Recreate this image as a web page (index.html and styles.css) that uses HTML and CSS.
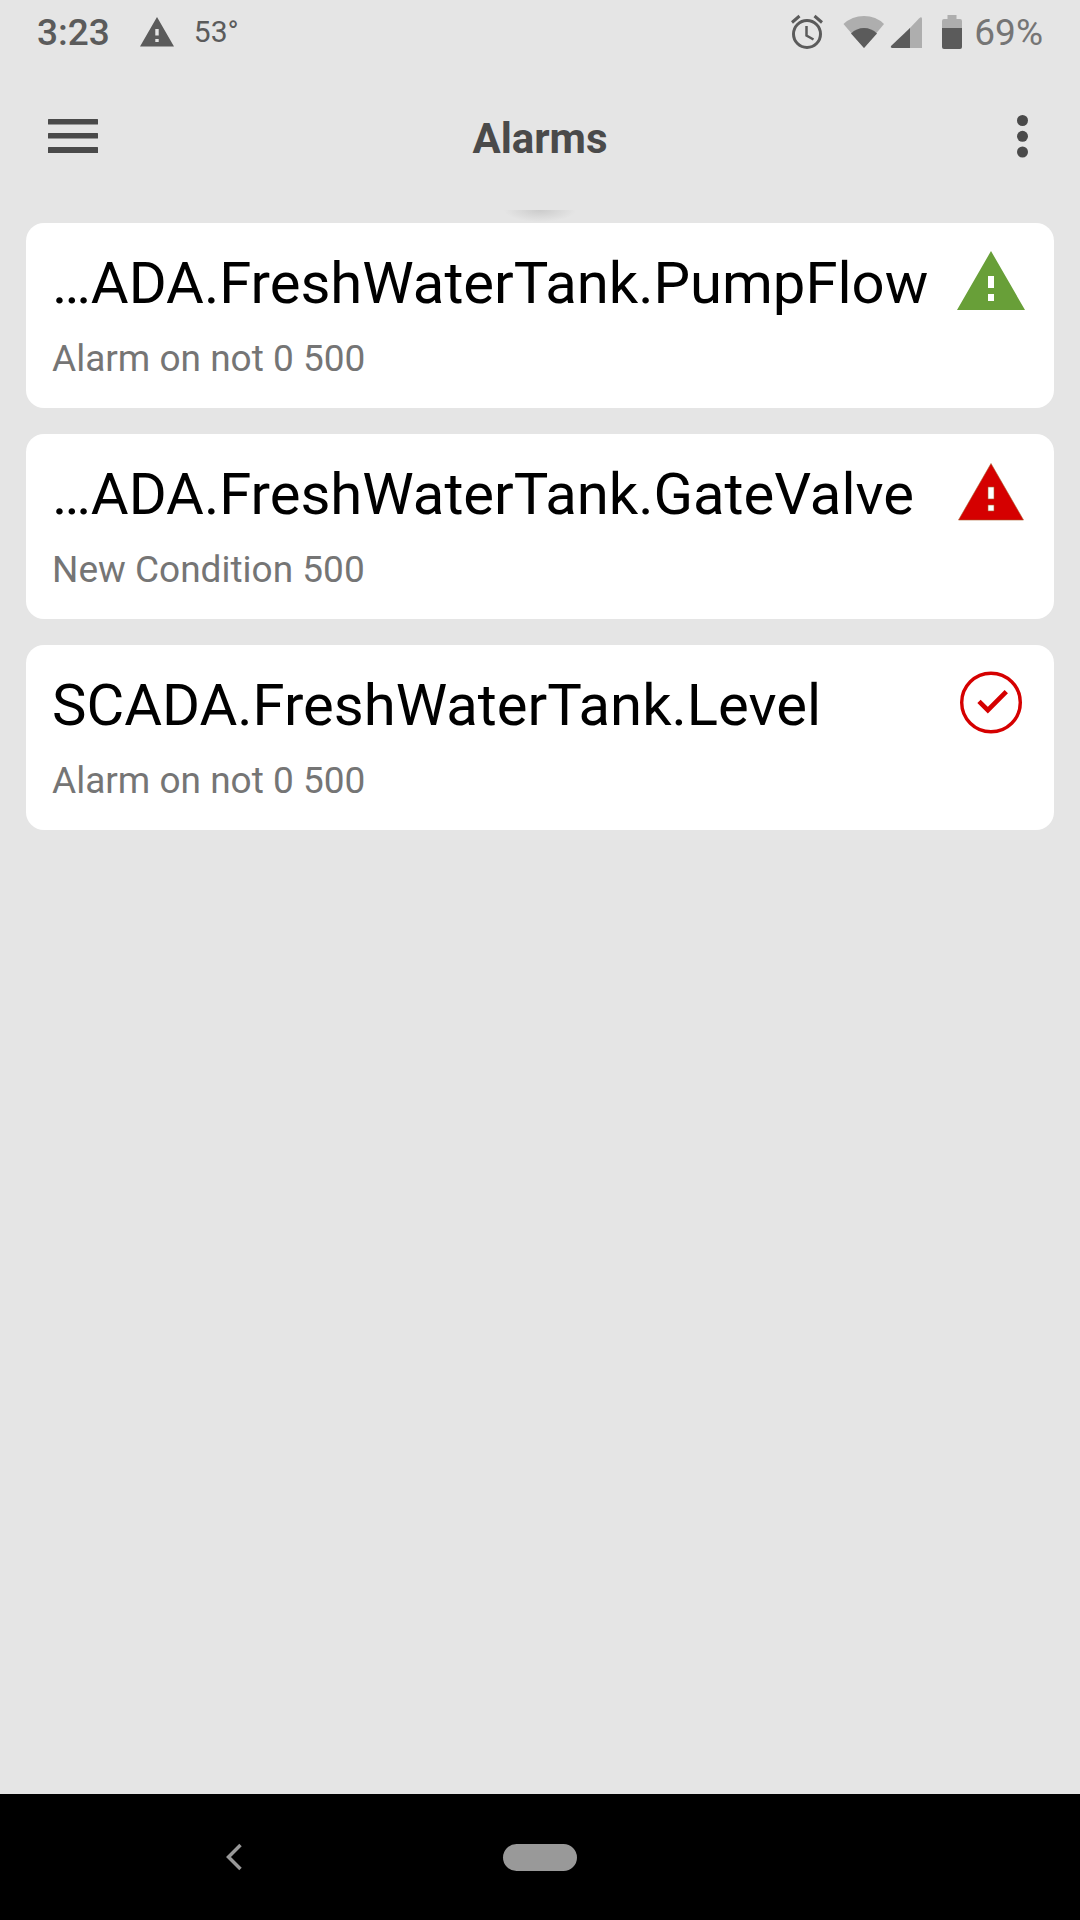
FILE: index.html
```html
<!DOCTYPE html>
<html lang="en">
<head>
<meta charset="utf-8">
<meta name="viewport" content="width=device-width, initial-scale=1">
<title>Alarms</title>
<link rel="stylesheet" href="styles.css">
</head>
<body>
<div class="status-bar">
  <div class="status-left">
    <span class="clock">3:23</span>
    <svg class="status-warning" width="36" height="30" viewBox="0 0 36 30" aria-hidden="true">
      <path fill="#5b5b5b" fill-rule="evenodd" d="M18 0 35 29.500H1ZM16.300 12v6.500h3.400V12ZM16.300 22v3h3.400v-3Z"/>
    </svg>
    <span class="temperature">53°</span>
  </div>
  <div class="status-right">
    <svg class="status-alarm" width="32" height="36" viewBox="0 0 32 36" aria-hidden="true">
      <g fill="none" stroke="#5b5b5b">
        <circle cx="16" cy="20" r="13.500" stroke-width="3"/>
        <path stroke-width="3" d="M1 8.500 8.500 2M31 8.500 23.500 2"/>
        <path stroke-width="2.500" d="M15.500 12v9.500l7 4"/>
      </g>
    </svg>
    <svg class="status-wifi" width="42" height="34" viewBox="0 0 42 34" aria-hidden="true">
      <path fill="#aeaeae" d="M.500 9Q9 1 21 1T41 9L21 33Z"/>
      <path fill="#5b5b5b" d="M8 18.500Q13.500 13 21 13t13 5.500L21 33Z"/>
    </svg>
    <svg class="status-signal" width="32" height="34" viewBox="0 0 32 34" aria-hidden="true">
      <path fill="#aeaeae" d="M19 14 29 3.500Q32 1 32 4v29H19Z"/>
      <path fill="#5b5b5b" d="M20 13v20H2Q0 32.500 1 31Z"/>
    </svg>
    <svg class="status-battery" width="20" height="34" viewBox="0 0 20 34" aria-hidden="true">
      <path fill="#aeaeae" d="M5.500 0h9v4H18q2 0 2 2v7H0V6q0-2 2-2h3.500Z"/>
      <path fill="#5b5b5b" d="M0 13h20v19q0 2-2 2H2q-2 0-2-2Z"/>
    </svg>
    <span class="battery-level">69%</span>
  </div>
</div>

<header class="app-bar">
  <button class="icon-button" type="button" aria-label="Open menu">
    <svg width="50" height="35" viewBox="0 0 50 35" fill="#4a4a4a" aria-hidden="true">
      <rect width="50" height="5.500" rx=".5"/><rect y="14" width="50" height="5.500" rx=".5"/><rect y="28" width="50" height="6" rx=".5"/>
    </svg>
  </button>
  <h1 class="app-title">Alarms</h1>
  <button class="icon-button icon-button-end" type="button" aria-label="More options">
    <svg width="20" height="45" viewBox="0 0 20 45" fill="#4a4a4a" aria-hidden="true">
      <circle cx="10.500" cy="6.500" r="5.500"/><circle cx="10.500" cy="22.300" r="5.500"/><circle cx="10.500" cy="38" r="5.500"/>
    </svg>
  </button>
</header>

<main class="content">
  <ul class="alarm-list">
    <li class="alarm-card">
      <div class="alarm-text">
        <h2 class="alarm-name">…ADA.FreshWaterTank.PumpFlow</h2>
        <p class="alarm-detail">Alarm on not 0 500</p>
      </div>
      <svg class="alarm-icon" viewBox="0 0 74 74" role="img" aria-label="Warning, normal">
        <path fill="#689f38" fill-rule="evenodd" d="M37 5 71 64H3ZM34 30v12h6V30ZM34 48v7h6v-7Z"/>
      </svg>
    </li>
    <li class="alarm-card">
      <div class="alarm-text">
        <h2 class="alarm-name">…ADA.FreshWaterTank.GateValve</h2>
        <p class="alarm-detail">New Condition 500</p>
      </div>
      <svg class="alarm-icon" viewBox="0 0 74 74" role="img" aria-label="Warning, active">
        <path fill="#d50000" stroke="#a8602f" stroke-width=".6" fill-rule="evenodd" d="M37 6.500 69.500 63h-65ZM34 30v12h6V30ZM34 48v6h6v-6Z"/>
      </svg>
    </li>
    <li class="alarm-card">
      <div class="alarm-text">
        <h2 class="alarm-name">SCADA.FreshWaterTank.Level</h2>
        <p class="alarm-detail">Alarm on not 0 500</p>
      </div>
      <svg class="alarm-icon" viewBox="0 0 74 74" role="img" aria-label="Acknowledged">
        <g fill="none" stroke="#d50000">
          <circle cx="37" cy="34.500" r="29.300" stroke-width="3.400"/>
          <path stroke-width="4.700" d="M25 33.300l8.850 8.850L52.300 23.700"/>
        </g>
      </svg>
    </li>
  </ul>
</main>

<nav class="nav-bar" aria-label="System">
  <button class="nav-back" type="button" aria-label="Back">
    <svg width="18" height="28" viewBox="0 0 18 28" aria-hidden="true">
      <path fill="none" stroke="#999" stroke-width="3.500" d="M15.500 2 3.500 14l12 12"/>
    </svg>
  </button>
  <button class="nav-home" type="button" aria-label="Home"></button>
</nav>
</body>
</html>
```
FILE: styles.css
```css
* {
  box-sizing: border-box;
}

body {
  margin: 0;
  min-height: 100vh;
  display: flex;
  flex-direction: column;
  background: #e5e5e5;
  color: #000;
  font-family: Roboto, "Noto Sans", sans-serif;
}

button {
  padding: 0;
  border: 0;
  background: none;
  cursor: pointer;
}

svg {
  display: block;
  flex: none;
}

/* System status bar */
.status-bar {
  display: flex;
  justify-content: space-between;
  height: 63px;
  padding: 0 37px;
  color: #5b5b5b;
}

.status-left,
.status-right {
  display: flex;
  align-items: center;
}

.clock,
.battery-level {
  padding-top: 2px;
  font-size: 37px;
  line-height: 43px;
  font-weight: 500;
}

.status-warning {
  margin-left: 29px;
}

.temperature {
  margin-left: 19px;
  font-size: 30px;
  font-weight: 400;
}

.battery-level {
  margin-left: 12px;
  color: #757575;
  font-weight: 400;
}

.status-wifi {
  margin-left: 20px;
}

.status-signal {
  margin-left: 5px;
}

.status-battery {
  margin-left: 20px;
}

/* App bar */
.app-bar {
  display: grid;
  grid-template-columns: 1fr auto 1fr;
  align-items: center;
  height: 147px;
  padding: 0 48px;
}

.icon-button {
  justify-self: start;
}

.icon-button-end {
  justify-self: end;
}

.app-title {
  margin: 0;
  padding-top: 4px;
  color: #4a4a4a;
  font-size: 42px;
  line-height: 50px;
  font-weight: 700;
}

/* Alarm list */
.content {
  flex: 1;
  padding: 13px 26px;
  background: radial-gradient(ellipse 36px 12px at 50% 0, #cbcbcb, #e5e5e5) no-repeat;
}

.alarm-list {
  display: flex;
  flex-direction: column;
  gap: 26px;
  margin: 0;
  padding: 0;
  list-style: none;
}

.alarm-card {
  display: flex;
  justify-content: space-between;
  padding: 26px 26px 28px;
  border-radius: 18px;
  background: #fff;
}

.alarm-text {
  display: flex;
  flex-direction: column;
  gap: 20px;
  min-width: 0;
}

.alarm-name {
  margin: 0;
  overflow: hidden;
  font-size: 58px;
  line-height: 68px;
  font-weight: 400;
  white-space: nowrap;
}

.alarm-detail {
  margin: 0;
  color: #757575;
  font-size: 37px;
  line-height: 43px;
}

.alarm-icon {
  width: 74px;
  height: 74px;
  margin-top: -3px;
}

/* System navigation */
.nav-bar {
  display: grid;
  grid-template-columns: 1fr auto 1fr;
  align-items: center;
  height: 126px;
  background: #000;
}

.nav-back {
  justify-self: center;
  margin-right: 36px;
}

.nav-home {
  width: 74px;
  height: 27px;
  border-radius: 14px;
  background: #999;
}
```
